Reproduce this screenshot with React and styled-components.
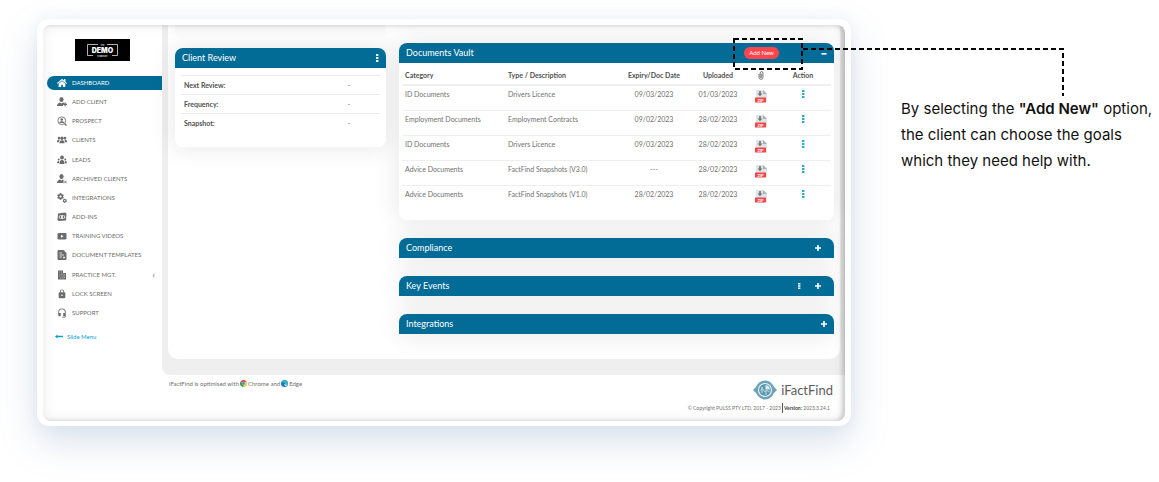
import styled, { createGlobalStyle } from "styled-components";
import { FaHome, FaCog } from "react-icons/fa";
import { MdLock, MdHeadsetMic } from "react-icons/md";

const GlobalStyle = createGlobalStyle`
    * {
        box-sizing: border-box;
    }

    body {
        margin: 0;
        background: #ffffff;
        font-family: Lato, "Open Sans", sans-serif;
        color: #707070;
    }

    button {
        border: 0;
        padding: 0;
        background: none;
        font: inherit;
        color: inherit;
        cursor: pointer;
    }

    svg {
        display: block;
    }
`;

const Page = styled.div`
    display: grid;
    grid-template-columns: minmax(0, 1fr) 258px;
    column-gap: 50px;
    align-items: start;
    padding: 19px 0 56px 37px;
`;

const Frame = styled.div`
    padding: 6px 6px 5px;
    border-radius: 12px;
    background: #ffffff;
    box-shadow: 0 16px 36px rgba(120, 150, 185, 0.28), 0 0 14px rgba(150, 175, 200, 0.12);
`;

const Screen = styled.div`
    position: relative;
    display: grid;
    grid-template-columns: 119px minmax(0, 1fr);
    border-radius: 8px;
    background: #ffffff;

    &::after {
        content: "";
        position: absolute;
        inset: 0;
        z-index: 1;
        border-radius: 8px;
        pointer-events: none;
        box-shadow: inset -3px 0 4px rgba(0, 0, 0, 0.18), inset 0 0 14px rgba(0, 0, 0, 0.08);
    }
`;

const Sidebar = styled.aside`
    padding: 14px 0 0 4px;
`;

const Brand = styled.div`
    width: 55px;
    margin: 0 0 15px 28px;
`;

const Nav = styled.nav`
    display: grid;
    grid-auto-rows: 1fr;
    align-items: start;
    min-height: 249px;
`;

const NavLink = styled.a`
    display: flex;
    align-items: center;
    gap: 5px;
    height: 14px;
    padding: 0 7px 0 10px;
    border-radius: 7px 0 0 7px;
    background: ${(props) => (props.$active ? "#036c96" : "transparent")};
    color: ${(props) => (props.$active ? "#ffffff" : "#6c6c6c")};
    font-size: 6px;
    line-height: 8px;
    text-decoration: none;
    white-space: nowrap;

    > svg {
        width: 10px;
        height: 10px;
        flex: none;
    }
`;

const Arrow = styled.span`
    margin-left: auto;
    font-size: 9px;
`;

const SlideMenu = styled.button`
    display: flex;
    align-items: center;
    gap: 4px;
    margin: 7px 0 0 8px;
    color: #0c9fd0;
    font-size: 6px;
    line-height: 9px;
`;

const Content = styled.div`
    display: flex;
    flex-direction: column;
`;

const Main = styled.main`
    padding: 0 5px 16px 6px;
    border-radius: 0 8px 0 8px;
    background: #efefef;
`;

const Panel = styled.div`
    isolation: isolate;
    display: grid;
    grid-template-columns: 211fr 435fr;
    column-gap: 13px;
    padding: 0 6px 25px 7px;
    border-radius: 0 0 10px 10px;
    background: #ffffff;
`;

const Column = styled.div`
    display: flex;
    flex-direction: column;
    gap: ${(props) => props.$gap}px;
    padding-top: ${(props) => props.$top || 0}px;
`;

const CardTail = styled.div`
    height: 15px;
    border-radius: 0 0 8px 8px;
    background: #fafafa;
`;

const Card = styled.section`
    position: relative;
    border-radius: ${(props) => (props.$closed ? "8px 8px 0 0" : "8px")};
    background: #ffffff;

    /* shadow sits behind every card so neighbours stay clean */
    &::before {
        content: "";
        position: absolute;
        inset: 0;
        z-index: -1;
        border-radius: 8px;
        box-shadow: 0 0 24px 2px rgba(0, 0, 0, 0.09);
    }
`;

const CardHeader = styled.header`
    display: flex;
    align-items: center;
    height: 20px;
    padding: 0 ${(props) => (props.$inset ? 13 : 7)}px 0 7px;
    border-radius: 8px 8px 0 0;
    background: #036c96;
    color: #ffffff;
`;

const CardTitle = styled.h2`
    margin: 0 auto 0 0;
    font-size: 9px;
    font-weight: 400;
    line-height: 12px;
`;

const HeaderButton = styled.button`
    display: flex;
    margin-left: ${(props) => props.$space || 0}px;
`;

const AddSpot = styled.div`
    position: relative;
    margin-right: 42px;
`;

const AddButton = styled.button`
    display: block;
    width: 35px;
    height: 12px;
    border-radius: 6px;
    background: #ff454c;
    color: #ffffff;
    font-size: 6px;
    line-height: 12px;
`;

const Connector = styled.svg`
    position: absolute;
    left: -11px;
    top: -10px;
    z-index: 2;
    pointer-events: none;
`;

const ReviewBody = styled.div`
    padding: 7px 6px 15px;
`;

const ReviewTable = styled.table`
    width: 100%;
    border-spacing: 0;
    font-size: 7px;
    line-height: 9px;

    th,
    td {
        padding: 5px 3px 4px;
        border-top: 1px solid #ebebeb;
    }

    th {
        color: #505050;
        text-align: left;
    }

    td {
        width: 62px;
        text-align: center;
    }
`;

const VaultBody = styled.div`
    padding: 0 3px 9px;
`;

const VaultTable = styled.table`
    width: 100%;
    table-layout: fixed;
    border-spacing: 0;
    font-size: 7px;
    line-height: 9px;

    th {
        padding: 8px 3px 4px;
        border-bottom: 2px solid #f0f0f0;
        color: #505050;
    }

    td {
        height: 25px;
        padding: 4px 3px 0;
        border-bottom: 1px solid #efefef;
        vertical-align: top;
    }

    tbody tr:last-child td {
        border-bottom-color: transparent;
    }
`;

const Col = styled.col`
    width: ${(props) => props.$width};
`;

const HeadCell = styled.th`
    text-align: ${(props) => (props.$center ? "center" : "left")};
`;

const Cell = styled.td`
    text-align: ${(props) => (props.$center ? "center" : "left")};

    svg,
    button {
        display: block;
        margin: 0 auto;
    }
`;

const Clip = styled.span`
    display: flex;
    justify-content: center;
`;

const Footer = styled.footer`
    display: flex;
    justify-content: space-between;
    padding: 4px 12px 8px 7px;
    line-height: 9px;
`;

const Browsers = styled.p`
    display: flex;
    align-items: center;
    gap: 1px;
    height: 9px;
    margin: 0;
    font-size: 6px;
`;

const Credits = styled.div`
    display: flex;
    flex-direction: column;
    align-items: flex-end;
    gap: 4px;
`;

const Product = styled.div`
    display: flex;
    align-items: center;
    gap: 4px;
    height: 21px;
    color: #5c5c5c;
    font-size: 13px;
    line-height: 16px;
`;

const Legal = styled.p`
    margin: 0;
    padding-right: 3px;
    font-size: 5px;

    strong {
        margin-left: 1px;
        padding: 2px 0 2px 1px;
        border-left: 1px solid #555555;
        color: #444444;
    }
`;

const Note = styled.p`
    margin: 77px 0 0;
    color: #111111;
    font-family: Inter, "Open Sans", sans-serif;
    font-size: 15px;
    line-height: 26px;
    white-space: nowrap;

    strong {
        font-weight: 600;
    }
`;

const AddClientIcon = () => (
    <svg viewBox="0 0 20 20" fill="currentColor">
        <ellipse cx="9" cy="5" rx="4.2" ry="5" />
        <path d="M0 18q0-5 6-7l3 2 3-2q2 .6 3 1.500L12 16v2z" />
        <path d="M15 11h2.500v2.500H20V16h-2.500v2.500H15V16h-2.500v-2.500H15z" />
    </svg>
);

const ArchivedIcon = () => (
    <svg viewBox="0 0 20 20" fill="currentColor">
        <ellipse cx="9" cy="5" rx="4.2" ry="5" />
        <path d="M0 18q0-5 6-7l3 2 3-2 1 .6v6.400z" />
        <path d="M14.500 13.500l4.500 5M19 13.500l-4.500 5" fill="none" stroke="currentColor" strokeWidth="1.700" />
    </svg>
);

const GroupIcon = () => (
    <svg viewBox="0 0 20 20" fill="currentColor">
        <circle cx="10" cy="6.500" r="3.300" />
        <circle cx="4" cy="6" r="2.500" />
        <circle cx="16" cy="6" r="2.500" />
        <path d="M5 16.500q-.5-6 5-6t5 6z" />
        <path d="M0 14.500q-.5-5.500 4-5.500 1.300 0 2 .6-2.300 1.800-2.300 4.900zM20 14.500q.5-5.500-4-5.500-1.300 0-2 .6 2.300 1.800 2.300 4.900z" />
    </svg>
);

const LeadsIcon = () => (
    <svg viewBox="0 0 20 20" fill="currentColor">
        <circle cx="10" cy="5" r="3.800" />
        <circle cx="3.500" cy="9" r="2" />
        <circle cx="16.500" cy="9" r="2" />
        <path d="M5 18q-.5-8 5-8t5 8z" />
        <path d="M0 16.500Q0 11.500 4 11.800V16.500zM20 16.500q0-5-4-4.700v4.700z" />
    </svg>
);

const ProspectIcon = () => (
    <svg viewBox="0 0 20 20" fill="none" stroke="currentColor" strokeWidth="1.7">
        <circle cx="9.5" cy="9.5" r="7.8" />
        <path d="M15 15l4 4" strokeWidth="2.4" />
        <circle cx="9.5" cy="7" r="2.6" fill="currentColor" stroke="none" />
        <path d="M4.6 14c0-5 9.8-5 9.8 0z" fill="currentColor" stroke="none" />
    </svg>
);

const GearsIcon = () => (
    <svg viewBox="0 0 20 20">
        <FaCog x="0" y="0" size={14} />
        <FaCog x="11" y="11" size={9} />
    </svg>
);

const AddInsIcon = () => (
    <svg viewBox="0 0 20 20">
        <path d="M2 3l14-2 3 2-1 14-15 1-2-2z" fill="currentColor" />
        <path d="M7 6l-3 4 3 4M13 6l3 4-3 4" fill="none" stroke="#fff" strokeWidth="1.6" />
        <rect x="8.3" y="6" width="3.4" height="8" rx="1.5" fill="#fff" />
    </svg>
);

const VideoIcon = () => (
    <svg viewBox="0 0 20 20">
        <rect x="1" y="4" width="18" height="13" rx="2.500" fill="currentColor" />
        <path d="M8 7.500l5 3-5 3z" fill="#fff" />
    </svg>
);

const TemplateIcon = () => (
    <svg viewBox="0 0 20 20">
        <path d="M3 0h10l6 6v12q0 2-2 2H3q-2 0-2-2V2q0-2 2-2z" fill="currentColor" />
        <path d="M5 6h5M5 10h9M5 14h5M14 13v4M12 15h4" stroke="#fff" strokeWidth="1.5" />
    </svg>
);

const BuildingIcon = () => (
    <svg viewBox="0 0 20 20">
        <path d="M2 1h10v5h6v13H2z" fill="currentColor" />
        <path d="M4.5 4h2M8 4h2M4.5 8h2M8 8h2M4.5 12h2M8 12h2M14 9h2M14 12h2M14 15h2M6 16h3" stroke="#fff" strokeWidth=".8" />
        <path d="M12.3 6v13" stroke="#fff" strokeWidth=".6" />
    </svg>
);

const Dots = ({ color, small }) => (
    <svg width="3" height={small ? 6 : 8} viewBox="0 0 3 8" preserveAspectRatio="none" fill={color}>
        <rect width="2.4" height="2" />
        <rect y="3" width="2.4" height="2" />
        <rect y="6" width="2.4" height="2" />
    </svg>
);

const Plus = () => (
    <svg width="6" height="6" viewBox="0 0 6 6" fill="#fff">
        <path d="M2.2 0h1.6v2.2H6v1.6H3.8V6H2.2V3.8H0V2.2h2.2z" />
    </svg>
);

const Minus = () => (
    <svg width="6" height="6" viewBox="0 0 6 6" fill="#fff">
        <rect x=".5" y="3" width="5" height="1.6" />
    </svg>
);

const ClipIcon = () => (
    <svg width="6" height="9" viewBox="0 0 6 9" fill="none" stroke="#555" strokeWidth=".8">
        <path d="M1 3v3.3a2 2 0 004 0V2a1.4 1.4 0 00-2.8 0v4a.8.8 0 001.5 0V2.6" />
    </svg>
);

const ZipIcon = () => (
    <svg width="12" height="13" viewBox="0 0 12 13">
        <path d="M1 0h7.5L12 3.500V12H1z" fill="#dfe3e6" />
        <path d="M8 0l4 4H8z" fill="#a9b0b6" />
        <path d="M4.200 1h1.600v2.600h1.600L5 6.200 2.600 3.600h1.600z" fill="#6d7275" />
        <rect y="7.500" width="11" height="5" rx=".6" fill="#f2464b" />
        <text x="5.500" y="11.700" fontSize="4" fontWeight="700" textAnchor="middle" fill="#fff">ZIP</text>
    </svg>
);

const DemoLogo = () => (
    <svg width="55" height="22" viewBox="0 0 55 22" fontFamily="Inter, sans-serif" textAnchor="middle">
        <rect width="55" height="22" fill="#000" />
        <path d="M23 5.500H12.500v11H18M32 5.500h10.500v11H37" fill="none" stroke="#ddd" strokeWidth=".8" />
        <text x="27.500" y="6.500" fontSize="2" fontWeight="700" fill="#ddd">THE</text>
        <text x="27.500" y="13.500" fontSize="7" fontWeight="900" fill="#fff">DEMO</text>
        <text x="27.500" y="17.500" fontSize="2" fontWeight="700" fill="#ddd">COMPANY</text>
    </svg>
);

const EyeLogo = () => (
    <svg width="24" height="20" viewBox="0 0 24 20">
        <path d="M0 10Q3 7.500 4.500 4.500 7.500.5 12 .5t7.500 4Q21 7.500 24 10q-3 2.500-4.500 5.500-3 4-7.500 4t-7.500-4Q3 12.500 0 10z" fill="#6ba3b9" />
        <circle cx="12" cy="10" r="6.500" fill="#5c98b0" stroke="#e4f0f4" strokeWidth="1.200" />
        <path d="M12.500 5v4.500H17A5 5 0 0012.500 5z" fill="#d9eaf0" />
        <path d="M7.500 10.500l2-2 2 3 2-1 3 1M9 7v6M13 11v4" fill="none" stroke="#d9eaf0" strokeWidth=".8" />
    </svg>
);

const ChromeLogo = () => (
    <svg width="7" height="7" viewBox="0 0 20 20">
        <path d="M10 10L1.300 5a10 10 0 0117.400 0z" fill="#dd4b3e" />
        <path d="M10 10l8.700-5A10 10 0 0110 20z" fill="#f7c92c" />
        <path d="M10 10v10A10 10 0 011.300 5z" fill="#2d9a50" />
        <circle cx="10" cy="10" r="4" fill="#3b7de0" stroke="#fff" strokeWidth="1" />
    </svg>
);

const EdgeLogo = () => (
    <svg width="7" height="7" viewBox="0 0 20 20">
        <circle cx="10" cy="10" r="10" fill="#1479c4" />
        <path d="M1 7a10 10 0 0119 3q0 4-5 4-3 0-3-2 2-4-3-5-4-1-8 0z" fill="#35c1b5" />
        <path d="M12 12q0 2 3 2 2 0 4-1-3 5-6 4-5-2-3-6z" fill="#fff" />
    </svg>
);

const navItems = [
    { label: "DASHBOARD", icon: <FaHome />, active: true },
    { label: "ADD CLIENT", icon: <AddClientIcon /> },
    { label: "PROSPECT", icon: <ProspectIcon /> },
    { label: "CLIENTS", icon: <GroupIcon /> },
    { label: "LEADS", icon: <LeadsIcon /> },
    { label: "ARCHIVED CLIENTS", icon: <ArchivedIcon /> },
    { label: "INTEGRATIONS", icon: <GearsIcon /> },
    { label: "ADD-INS", icon: <AddInsIcon /> },
    { label: "TRAINING VIDEOS", icon: <VideoIcon /> },
    { label: "DOCUMENT TEMPLATES", icon: <TemplateIcon /> },
    { label: "PRACTICE MGT.", icon: <BuildingIcon />, more: true },
    { label: "LOCK SCREEN", icon: <MdLock /> },
    { label: "SUPPORT", icon: <MdHeadsetMic /> },
];

const documents = [
    ["ID Documents", "Drivers Licence", "09/03/2023", "01/03/2023"],
    ["Employment Documents", "Employment Contracts", "09/02/2023", "28/02/2023"],
    ["ID Documents", "Drivers Licence", "09/03/2023", "28/02/2023"],
    ["Advice Documents", "FactFind Snapshots (V3.0)", "---", "28/02/2023"],
    ["Advice Documents", "FactFind Snapshots (V1.0)", "28/02/2023", "28/02/2023"],
];

const Menu = () => (
    <Sidebar>
        <Brand><DemoLogo /></Brand>
        <Nav>
            {navItems.map((item) => (
                <NavLink key={item.label} href="#" $active={item.active}>
                    {item.icon}
                    {item.label}
                    {item.more && <Arrow>‹</Arrow>}
                </NavLink>
            ))}
        </Nav>
        <SlideMenu>
            <svg width="8" height="5" viewBox="0 0 8 5" fill="currentColor">
                <path d="M0 2.500L2.500.5v1.300H8v1.400H2.500v1.300z" />
            </svg>
            Slide Menu
        </SlideMenu>
    </Sidebar>
);

const ClientReview = () => (
    <Card>
        <CardHeader>
            <CardTitle>Client Review</CardTitle>
            <HeaderButton aria-label="Review options"><Dots color="#fff" /></HeaderButton>
        </CardHeader>
        <ReviewBody>
            <ReviewTable>
                <tbody>
                    {["Next Review:", "Frequency:", "Snapshot:"].map((label) => (
                        <tr key={label}>
                            <th scope="row">{label}</th>
                            <td>-</td>
                        </tr>
                    ))}
                </tbody>
            </ReviewTable>
        </ReviewBody>
    </Card>
);

const DocumentsVault = () => (
    <Card>
        <CardHeader>
            <CardTitle>Documents Vault</CardTitle>
            <AddSpot>
                <AddButton>Add New</AddButton>
                <Connector width="332" height="60" viewBox="0 0 332 60" fill="none" stroke="#000" strokeWidth="2" strokeDasharray="5 3" aria-hidden="true">
                    <path d="M1 2h68v30H1z" />
                    <path d="M70 12h260v47" />
                </Connector>
            </AddSpot>
            <HeaderButton aria-label="Collapse"><Minus /></HeaderButton>
        </CardHeader>
        <VaultBody>
            <VaultTable>
                <colgroup>
                    <Col $width="24%" />
                    <Col />
                    <Col $width="70px" />
                    <Col $width="58px" />
                    <Col $width="28px" />
                    <Col $width="56px" />
                </colgroup>
                <thead>
                    <tr>
                        <HeadCell>Category</HeadCell>
                        <HeadCell>Type / Description</HeadCell>
                        <HeadCell $center>Expiry/Doc Date</HeadCell>
                        <HeadCell $center>Uploaded</HeadCell>
                        <HeadCell $center aria-label="Attachment">
                            <Clip><ClipIcon /></Clip>
                        </HeadCell>
                        <HeadCell $center>Action</HeadCell>
                    </tr>
                </thead>
                <tbody>
                    {documents.map(([category, type, expiry, uploaded], index) => (
                        <tr key={index}>
                            <Cell>{category}</Cell>
                            <Cell>{type}</Cell>
                            <Cell $center>{expiry}</Cell>
                            <Cell $center>{uploaded}</Cell>
                            <Cell $center><ZipIcon /></Cell>
                            <Cell $center>
                                <button aria-label="Actions"><Dots color="#25a9d6" /></button>
                            </Cell>
                        </tr>
                    ))}
                </tbody>
            </VaultTable>
        </VaultBody>
    </Card>
);

const ClosedCard = ({ title, inset, options }) => (
    <Card $closed>
        <CardHeader $inset={inset}>
            <CardTitle>{title}</CardTitle>
            {options && (
                <HeaderButton aria-label={`${title} options`}><Dots color="#fff" small /></HeaderButton>
            )}
            <HeaderButton aria-label={`Expand ${title}`} $space={14}><Plus /></HeaderButton>
        </CardHeader>
    </Card>
);

const App = () => {
    return (
        <>
            <GlobalStyle />
            <Page>
                <Frame>
                    <Screen>
                        <Menu />
                        <Content>
                            <Main>
                                <Panel>
                                    <Column $gap={8}>
                                        <CardTail />
                                        <ClientReview />
                                    </Column>
                                    <Column $gap={18} $top={18}>
                                        <DocumentsVault />
                                        <ClosedCard title="Compliance" inset />
                                        <ClosedCard title="Key Events" inset options />
                                        <ClosedCard title="Integrations" />
                                    </Column>
                                </Panel>
                            </Main>
                            <Footer>
                                <Browsers>
                                    iFactFind is optimised with <ChromeLogo /> Chrome and <EdgeLogo /> Edge
                                </Browsers>
                                <Credits>
                                    <Product><EyeLogo />iFactFind</Product>
                                    <Legal>
                                        © Copyright PULSS PTY LTD. 2017 - 2023<strong>Version:</strong> 2023.3.24.1
                                    </Legal>
                                </Credits>
                            </Footer>
                        </Content>
                    </Screen>
                </Frame>
                <Note>
                    By selecting the <strong>"Add New"</strong> option,<br />
                    the client can choose the goals<br />
                    which they need help with.
                </Note>
            </Page>
        </>
    );
};

export default App;
